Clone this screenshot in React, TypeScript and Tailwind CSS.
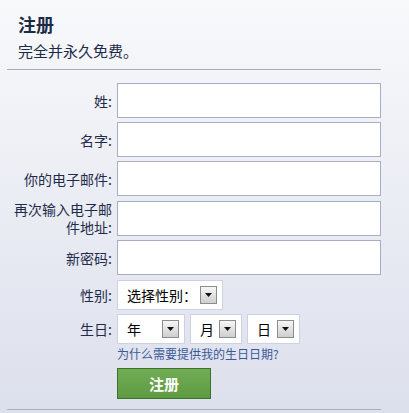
import React from "react";

const font = { fontFamily: '"Noto Sans CJK SC", "Noto Sans", sans-serif' };

function Arrow() {
  return (
    <div className="w-[17px] h-[18px] border border-[#8c8c8c] bg-gradient-to-b from-[#f6f6f6] to-[#cfcfcf] flex items-center justify-center">
      <svg width="8" height="5" viewBox="0 0 8 5">
        <path d="M0 0 H7 L3.5 4 Z" fill="#111" />
      </svg>
    </div>
  );
}

function Select({ text, w }: { text: string; w: string }) {
  return (
    <div className={`${w} h-[30px] bg-white border border-[#ccd2e2] flex items-center pl-[9px] pr-[5px] justify-between`}>
      <span className="text-[14px] leading-[16px] text-black">{text}</span>
      <Arrow />
    </div>
  );
}

function Row({ label, children }: { label: React.ReactNode; children: React.ReactNode }) {
  return (
    <div className="flex items-center">
      <div className="w-[112px] text-right text-[14px] leading-[18px] text-[#1f2b4a] pl-[12px]">{label}</div>
      <div className="ml-[5px]">{children}</div>
    </div>
  );
}

function Input() {
  return <div className="w-[264px] h-[35px] bg-white border border-[#a6aec6]" />;
}

export default function App() {
  return (
    <div style={font} className="w-[409px] h-[413px] bg-gradient-to-b from-[#f8f9fb] to-[#dce0ec] overflow-hidden">
      <div className="pl-[18px] pt-[13px]">
        <div className="text-[18px] leading-[22px] font-bold text-[#1c2a47]">注册</div>
        <div className="text-[15px] leading-[18px] text-[#1c2a47] mt-[7px]">完全并永久免费。</div>
      </div>
      <div className="ml-[7px] w-[374px] border-t border-[#a6aec6] mt-[9px]" />
      <div className="flex flex-col gap-[4px] mt-[13px]">
        <Row label="姓:"><Input /></Row>
        <Row label="名字:"><Input /></Row>
        <Row label="你的电子邮件:"><Input /></Row>
        <Row label="再次输入电子邮件地址:"><Input /></Row>
        <Row label="新密码:"><Input /></Row>
      </div>
      <div className="flex flex-col gap-[4px] mt-[5px]">
        <Row label="性别:">
          <Select text="选择性别：" w="w-[106px]" />
        </Row>
        <Row label="生日:">
          <div className="flex gap-[5px]">
            <Select text="年" w="w-[68px]" />
            <Select text="月" w="w-[52px]" />
            <Select text="日" w="w-[53px]" />
          </div>
        </Row>
      </div>
      <div className="ml-[117px] mt-[3px] text-[12px] leading-[14px] text-[#3b5998]">为什么需要提供我的生日日期?</div>
      <div className="ml-[117px] mt-[7px] w-[94px] h-[31px] border border-[#3f7227] bg-gradient-to-b from-[#71ad54] to-[#5e9a41] flex items-center justify-center">
        <span className="text-white font-bold text-[15px] leading-[18px]">注册</span>
      </div>
      <div className="ml-[7px] w-[374px] border-t border-[#a6aec6] mt-[10px]" />
    </div>
  );
}
